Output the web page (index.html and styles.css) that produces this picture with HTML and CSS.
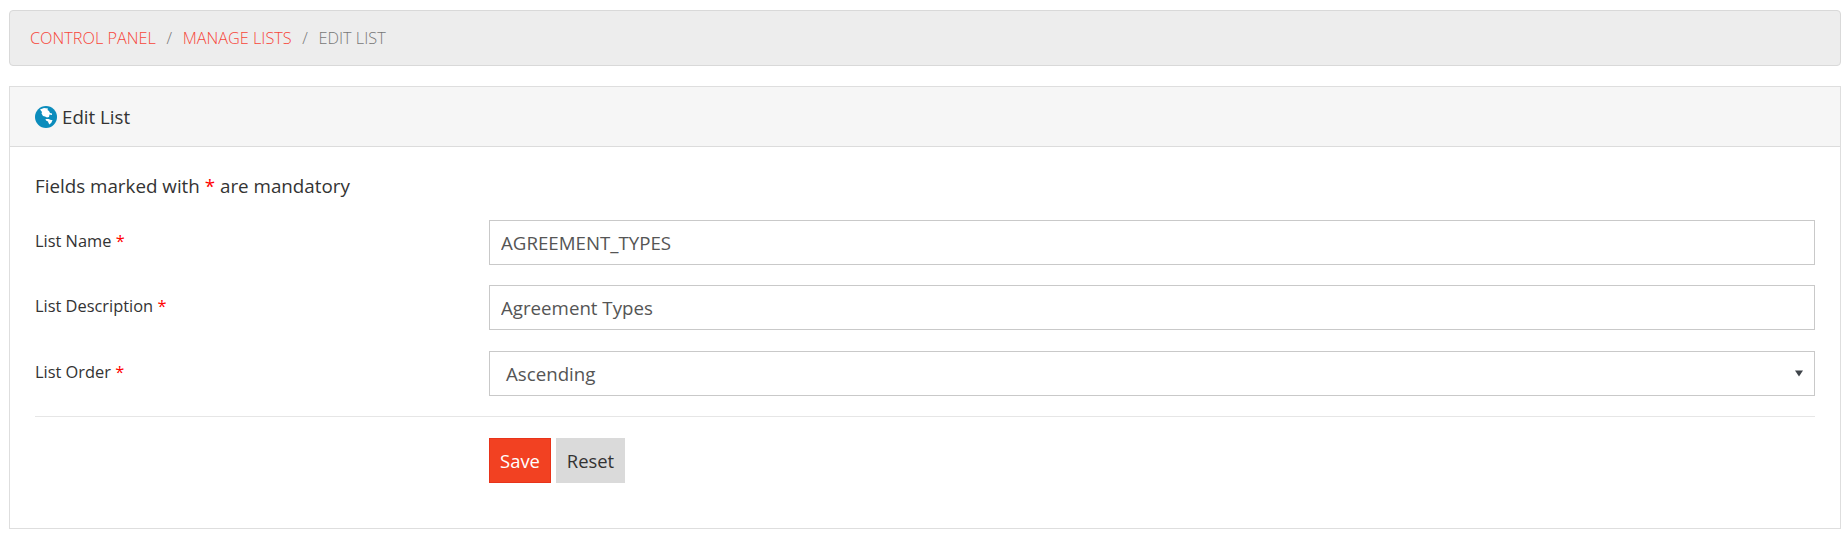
FILE: index.html
```html
<!DOCTYPE html>
<html lang="en">
<head>
<meta charset="utf-8">
<title>Edit List</title>
<link rel="stylesheet" href="styles.css">
</head>
<body>
<nav class="breadcrumb">
  <a href="#">CONTROL PANEL</a><span class="sep">/</span><a href="#">MANAGE LISTS</a><span class="sep">/</span><span class="current">EDIT LIST</span>
</nav>
<section class="panel">
  <header class="panel-head">
    <svg class="globe" viewBox="0 0 22 22" aria-hidden="true">
      <circle cx="11" cy="11" r="11" fill="#0b8cbc"/>
      <path fill="#fff" d="M5 3.5 L9 2 L13 2.5 L12.5 4 L14 5 L15 7 L17 7.5 L17 9 L14.5 8.5 L14 11 L12 11.5 L10 10.5 L8 10 L6.5 7.5 L7 6 Z"/>
      <path fill="#fff" d="M10.5 13 L13.5 13 L16 14 L17.5 14 L16.5 16.5 L14.5 18.5 L13.5 17 L13 15.5 L11 14.5 Z"/>
    </svg>
    <span>Edit List</span>
  </header>
  <div class="panel-body">
    <p class="note">Fields marked with <span class="req">*</span> are mandatory</p>
    <form class="form">
      <div class="row">
        <label class="lbl" for="name">List Name <span class="req">*</span></label>
        <input class="ctl" id="name" type="text" value="AGREEMENT_TYPES">
      </div>
      <div class="row">
        <label class="lbl" for="desc">List Description <span class="req">*</span></label>
        <input class="ctl" id="desc" type="text" value="Agreement Types">
      </div>
      <div class="row">
        <label class="lbl" for="order">List Order <span class="req">*</span></label>
        <div class="ctl select" id="order">
          <span>Ascending</span>
          <svg class="caret" viewBox="0 0 8 7" aria-hidden="true"><path d="M0 0.5H8L4 6.5Z" fill="#3f444a"/></svg>
        </div>
      </div>
      <hr class="rule">
      <div class="actions">
        <button class="btn save" type="button">Save</button>
        <button class="btn reset" type="button">Reset</button>
      </div>
    </form>
  </div>
</section>
</body>
</html>
```
FILE: styles.css
```css
* { box-sizing: border-box; }
html, body { margin: 0; background: #fff; }
body {
  padding: 10px 7px 0 9px;
  font-family: "Open Sans", sans-serif;
  color: #333;
}
.breadcrumb {
  height: 56px;
  display: flex;
  align-items: center;
  padding: 0 20px;
  background: #ededed;
  border: 1px solid #d9d9d9;
  border-radius: 4px;
  font-size: 16.3px;
  font-weight: 300;
}
.breadcrumb a { color: #f7463a; text-decoration: none; }
.sep { padding: 0 10.6px; color: #777; }
.current { color: #777; }
.panel {
  margin-top: 20px;
  height: 443px;
  border: 1px solid #dedede;
}
.panel-head {
  height: 60px;
  display: flex;
  align-items: center;
  gap: 5px;
  padding: 0 25px;
  background: #f6f6f6;
  border-bottom: 1px solid #dcdcdc;
  font-size: 18.7px;
  color: #333;
}
.globe { width: 22px; height: 22px; flex: none; }
.panel-body { padding: 27px 25px 0 25px; }
.note { margin: 0 0 22px; font-size: 18.8px; line-height: 24px; color: #333; }
.req { color: #f00; }
.form { display: flex; flex-direction: column; }
.row {
  display: flex;
  align-items: flex-start;
  margin-bottom: 20.4px;
}
.lbl {
  width: 454px;
  flex: none;
  padding-top: 10px;
  font-size: 16.4px;
  line-height: 22px;
  color: #333;
}
.ctl {
  flex: 1;
  min-width: 0;
  height: 45px;
  padding: 0 11px;
  border: 1px solid #c9c9c9;
  background: #fff;
  font: 18.7px "Open Sans", sans-serif;
  color: #555;
  outline: 0;
}
.select {
  display: flex;
  align-items: center;
  justify-content: space-between;
  padding: 0 11px 0 16px;
}
.caret { width: 8px; height: 7px; flex: none; }
.rule {
  margin: 0;
  border: 0;
  border-top: 1px solid #e6e6e6;
}
.actions {
  display: flex;
  gap: 5px;
  margin: 21px 0 0 454px;
}
.btn {
  height: 45px;
  width: 62px;
  padding: 0;
  border: 1px solid transparent;
  font: 18.4px "Open Sans", sans-serif;
  font-weight: 400;
}
.save { background: #f24122; border-color: #e8331a; color: #fff; }
.reset { width: 69px; background: #dadada; border-color: #dadada; color: #333; }
```
